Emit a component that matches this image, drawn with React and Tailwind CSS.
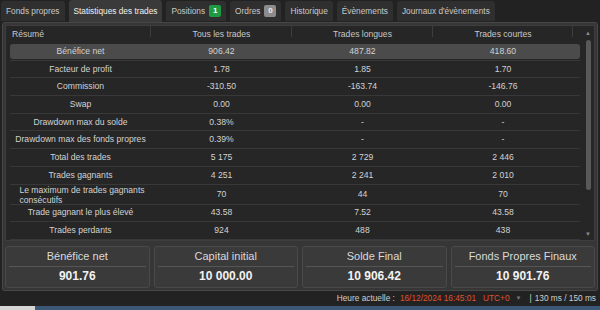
const TABS = [
  { label: 'Fonds propres' },
  { label: 'Statistiques des trades', active: true },
  { label: 'Positions', badge: '1', badgeClass: 'bg-[#1f9a43] text-white' },
  { label: 'Ordres', badge: '0', badgeClass: 'bg-[#8c8c8c] text-[#eeeeee]' },
  { label: 'Historique' },
  { label: 'Évènements' },
  { label: "Journaux d'évènements" },
]

const ROWS = [
  ['Bénéfice net', '906.42', '487.82', '418.60'],
  ['Facteur de profit', '1.78', '1.85', '1.70'],
  ['Commission', '-310.50', '-163.74', '-146.76'],
  ['Swap', '0.00', '0.00', '0.00'],
  ['Drawdown max du solde', '0.38%', '-', '-'],
  ['Drawdown max des fonds propres', '0.39%', '-', '-'],
  ['Total des trades', '5 175', '2 729', '2 446'],
  ['Trades gagnants', '4 251', '2 241', '2 010'],
  ['Le maximum de trades gagnants|consécutifs', '70', '44', '70'],
  ['Trade gagnant le plus élevé', '43.58', '7.52', '43.58'],
  ['Trades perdants', '924', '488', '438'],
]

const CARDS = [
  ['Bénéfice net', '901.76'],
  ['Capital initial', '10 000.00'],
  ['Solde Final', '10 906.42'],
  ['Fonds Propres Finaux', '10 901.76'],
]

const COLS = 'grid grid-cols-[141px_141px_141px_140px]'

function Tab({ label, active, badge, badgeClass }) {
  return (
    <div
      className={`flex items-center gap-[4px] px-[5px] rounded-t-[3px] text-[8.3px] ${
        active ? 'h-[22px] bg-[#3a3a3a] text-[#f0f0f0]' : 'h-[20px] mb-[1px] bg-[#2f2f2f] text-[#c9c9c9]'
      }`}
    >
      <span>{label}</span>
      {badge && (
        <span className={`w-[12px] h-[12px] rounded-[2px] flex items-center justify-center text-[8px] font-bold ${badgeClass}`}>
          {badge}
        </span>
      )}
    </div>
  )
}

function StatRow({ cells, highlight, tall }) {
  const [label, ...values] = cells
  const lines = label.split('|')
  return (
    <div className={`${tall ? 'h-[20px]' : 'h-[17.8px]'} border-b border-[#383838] flex items-center`}>
      <div className={`${COLS} w-full items-center rounded-[3px] ${tall ? 'h-[19px]' : 'h-[15px]'} ${highlight ? 'bg-[#4b4b4b]' : ''}`}>
        <div className="flex justify-center">
          {tall ? (
            <span className="text-left leading-[10px] whitespace-nowrap pl-[3px]">
              {lines[0]}
              <br />
              {lines[1]}
            </span>
          ) : (
            <span>{label}</span>
          )}
        </div>
        {values.map((v, i) => (
          <div key={i} className="text-center">{v}</div>
        ))}
      </div>
    </div>
  )
}

export default function App() {
  return (
    <div
      className="w-[600px] h-[310px] bg-[#222222] flex flex-col text-[8.6px] text-[#d2d2d2] overflow-hidden"
      style={{ fontFamily: '"Liberation Sans", Arial, sans-serif' }}
    >
      <div className="h-[22px] flex items-end gap-[4px] pl-[1px]">
        {TABS.map((t) => (
          <Tab key={t.label} {...t} />
        ))}
      </div>

      <div className="mx-[2px] h-[269px] bg-[#363636] border border-[#474747] rounded-t-[3px] rounded-b-[2px] px-[2px] pt-[2px] pb-[3px] flex flex-col">
        <div className="h-[216px] bg-[#262626] border border-[#3e3e3e] flex">
          <div className="flex-1 flex flex-col pl-[4px] pr-[2px]">
            <div className={`${COLS} h-[17px] items-center text-[#c6c6c6]`}>
              {['Résumé', 'Tous les trades', 'Trades longues', 'Trades courtes'].map((h, i) => (
                <div
                  key={h}
                  className={`relative after:absolute after:right-0 after:top-[-3px] after:h-[12px] after:w-px after:bg-[#3d3d3d] ${
                    i === 0 ? 'pl-[2px]' : 'text-center'
                  }`}
                >
                  {h}
                </div>
              ))}
            </div>
            {ROWS.map((r, i) => (
              <StatRow key={r[0]} cells={r} highlight={i === 0} tall={i === 8} />
            ))}
          </div>
          <div className="w-[12px] flex flex-col items-center pt-[3px] pb-[2px]">
            <span className="text-[6px] leading-[8px] text-[#8a8a8a]">▲</span>
            <div className="mt-[3px] w-[5px] h-[150px] rounded-full bg-[#595959]" />
            <div className="flex-1" />
            <span className="text-[6px] leading-[8px] text-[#8a8a8a]">▼</span>
          </div>
        </div>

        <div className="mt-[5px] grid grid-cols-4 gap-[4px]">
          {CARDS.map(([title, value]) => (
            <div key={title} className="h-[42px] bg-[#3a3a3a] border border-[#4a4a4a] rounded-[3px] flex flex-col items-center pt-[3px]">
              <div className="text-[11px] leading-[13px] text-[#d9d9d9]">{title}</div>
              <div className="self-stretch mx-[3px] h-px bg-[#555555] mt-[3px]" />
              <div className="text-[12px] leading-[16px] font-bold text-[#f2f2f2] mt-[1px]">{value}</div>
            </div>
          ))}
        </div>
      </div>

      <div className="h-[15px] flex items-center justify-end pr-[4px] gap-[3px] text-[8.3px] text-[#cfcfcf]">
        <span>Heure actuelle :</span>
        <span className="text-[#e0512b] ml-[2px]">16/12/2024 16:45:01</span>
        <span className="text-[#e0512b] ml-[4px]">UTC+0</span>
        <span className="text-[6px] text-[#777777] ml-[3px]">▼</span>
        <span className="ml-[5px]">|</span>
        <span>130 ms / 150 ms</span>
      </div>

      <div className="flex-1 flex">
        <div className="w-[35px] bg-[#d6d6d6]" />
        <div className="flex-1 bg-[#3b5877]" />
      </div>
    </div>
  )
}
